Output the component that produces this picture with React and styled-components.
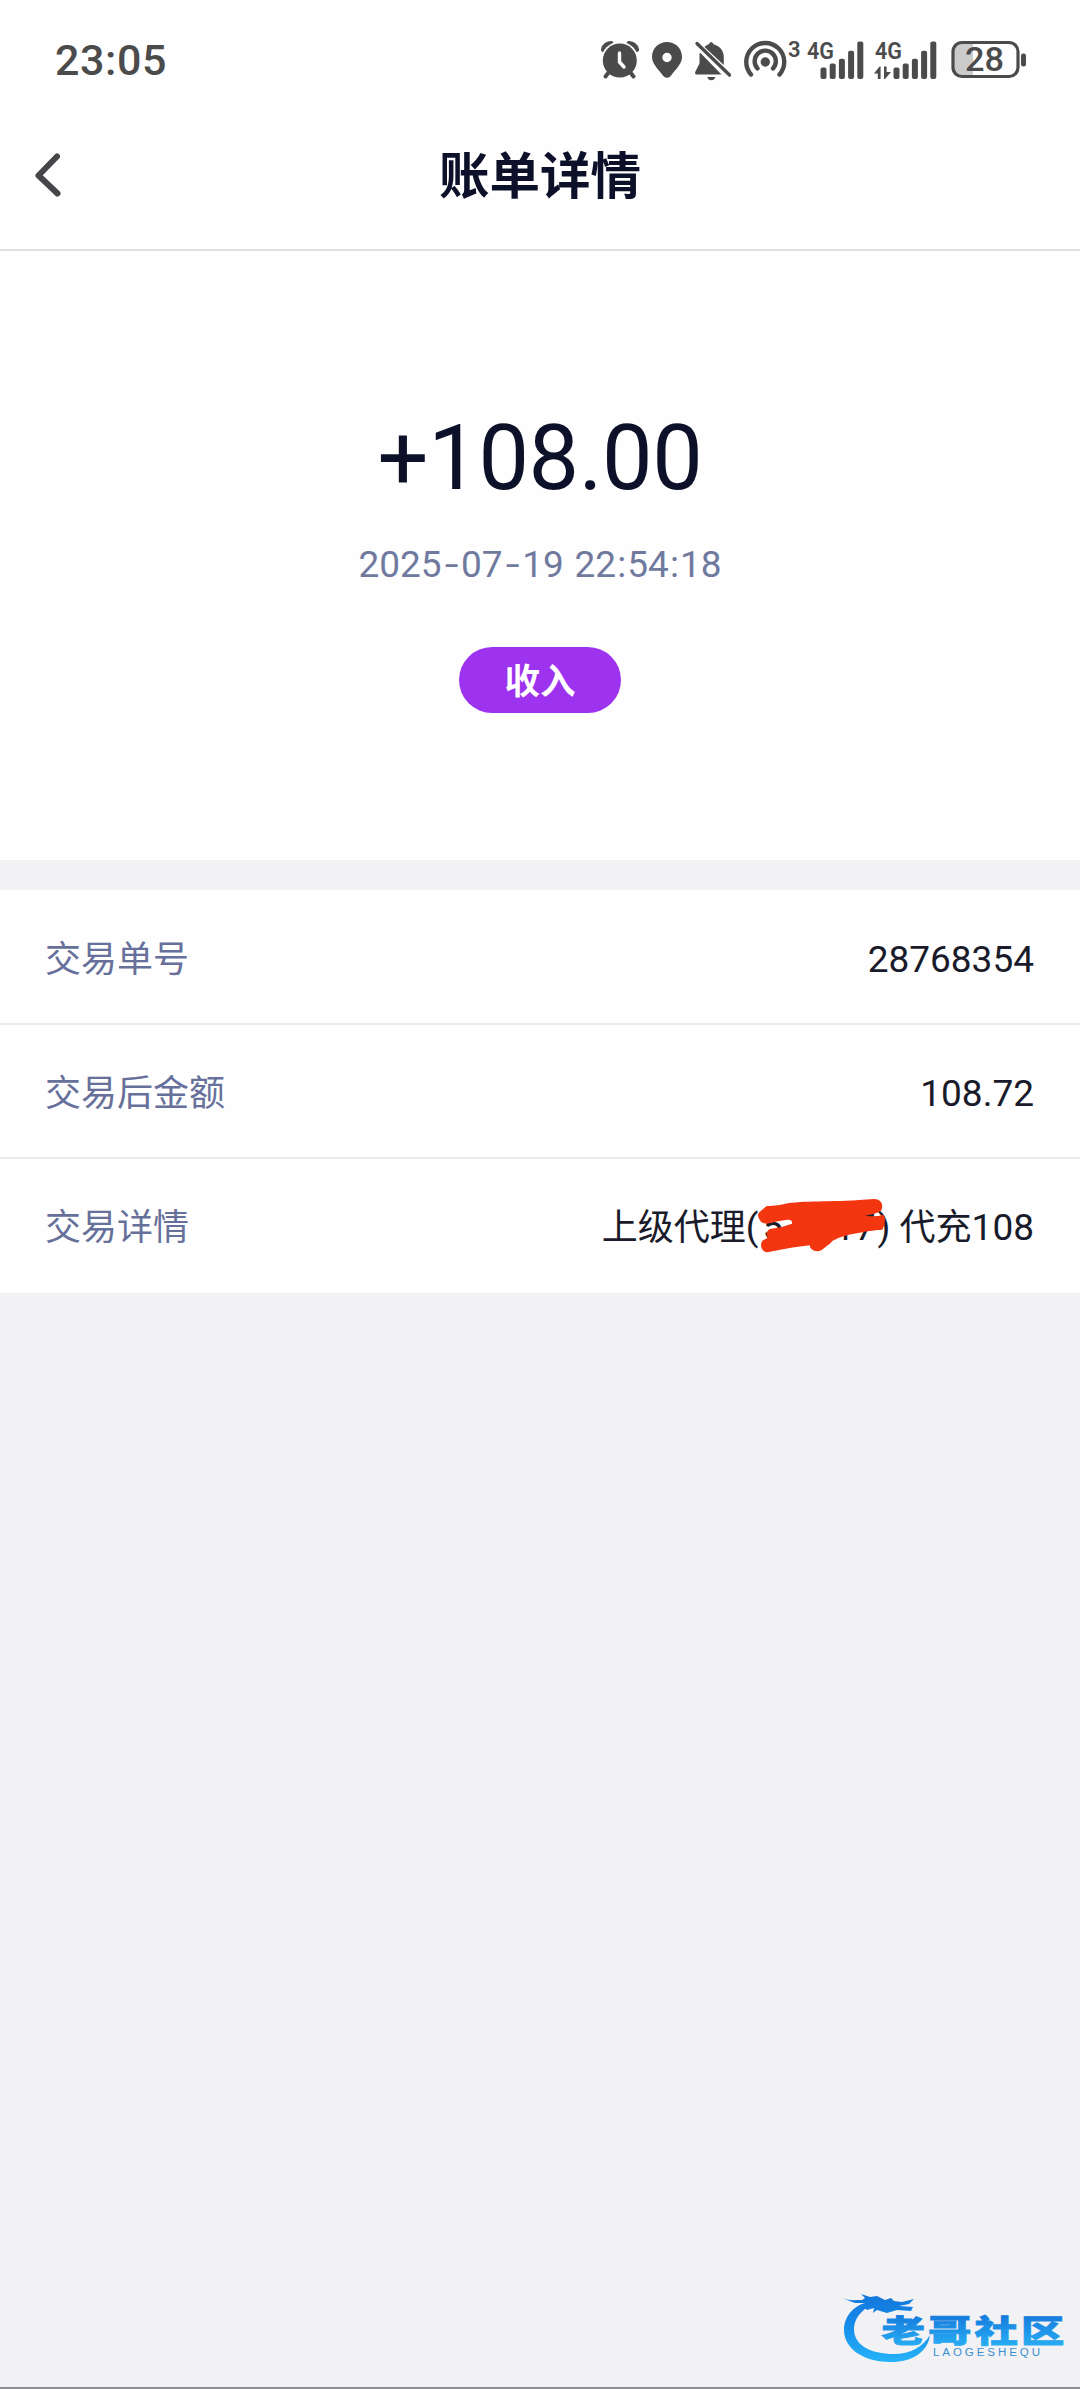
import React from 'react';
import styled, { createGlobalStyle } from 'styled-components';

const ink = '#4b4b4c';

const GlobalStyle = createGlobalStyle`
  * { box-sizing: border-box; }
  body {
    margin: 0;
    background: #f2f2f4;
    font-family: Roboto, "Noto Sans CJK SC", sans-serif;
  }
`;

const Screen = styled.div`
  width: 1080px;
  height: 2389px;
  display: flex;
  flex-direction: column;
  background: #f2f2f4;
  border-bottom: 2px solid #8f8f91;
  overflow: hidden;
`;

const StatusBar = styled.div`
  height: 120px;
  flex: none;
  display: flex;
  align-items: center;
  justify-content: space-between;
  padding: 0 52px 0 55px;
  background: #fefefe;
`;

const Clock = styled.div`
  font-size: 43px;
  font-weight: 500;
  line-height: 50px;
  letter-spacing: 0.6px;
  color: ${ink};
`;

const StatusIcons = styled.div`
  display: flex;
  align-items: center;
`;

const StatusSvg = styled.svg`
  display: block;
  height: 44px;
  width: ${(p) => p.$w}px;
  margin-left: ${(p) => p.$gap || 0}px;
  fill: ${ink};
  font-family: Roboto, sans-serif;
  overflow: visible;
`;

const Header = styled.header`
  height: 131px;
  flex: none;
  display: grid;
  grid-template-columns: 100px 1fr 100px;
  align-items: center;
  background: #fefefe;
  border-bottom: 2px solid #dfdfe0;
  padding-bottom: 20px;
`;

const BackButton = styled.button`
  border: 0;
  background: none;
  padding: 0 0 0 34px;
  display: flex;
`;

const Title = styled.h1`
  margin: 0;
  padding-top: 4px;
  text-align: center;
  font-size: 50.5px;
  font-weight: 700;
  line-height: 60px;
  color: #0c1029;
`;

const Hero = styled.section`
  height: 609px;
  flex: none;
  display: flex;
  flex-direction: column;
  align-items: center;
  padding-top: 155px;
  background: #fefefe;
`;

const Amount = styled.div`
  font-size: 90px;
  line-height: 106px;
  letter-spacing: -0.4px;
  color: #0c1029;
`;

const Timestamp = styled.div`
  margin-top: 31px;
  font-size: 37px;
  line-height: 44px;
  color: #707a9f;
  white-space: pre;
  word-spacing: 1.5px;
`;

const Dash = styled.span`
  display: inline-block;
  width: 19.5px;
  text-align: center;
  transform: scaleX(1.35);
`;

const Colon = styled.span`
  display: inline-block;
  width: 11.2px;
  text-align: center;
`;

const Tag = styled.div`
  margin-top: 60px;
  width: 162px;
  height: 66px;
  border-radius: 33px;
  display: flex;
  align-items: center;
  justify-content: center;
  padding-bottom: 3px;
  background: #9d33ee;
  color: #fff;
  font-size: 35.5px;
  font-weight: 700;
`;

const Details = styled.section`
  flex: none;
  margin-top: 30px;
  background: #fefefe;
`;

const Row = styled.div`
  height: 134px;
  display: flex;
  align-items: center;
  justify-content: space-between;
  padding: 6px 46px 0 45px;
  border-bottom: 2px solid #ebebed;
  &:first-child { height: 135px; }
  &:last-child { border-bottom-color: transparent; }
`;

const Label = styled.span`
  font-size: 36px;
  line-height: 52px;
  color: #66709a;
`;

const Value = styled.span`
  font-size: 37px;
  line-height: 52px;
  color: #191b2a;
  white-space: pre;
`;

const Han = styled.span`
  font-size: 36px;
`;

const Redacted = styled.span`
  position: relative;
  display: inline-flex;
  justify-content: space-between;
  width: 119px;
  padding: 0 2px 0 4px;
`;

const Scribble = styled.svg`
  position: absolute;
  left: -3px;
  top: -4.5px;
  width: 130px;
  height: 55px;
`;

const Watermark = styled.svg`
  align-self: flex-end;
  margin-top: auto;
  flex: none;
  width: 250px;
  height: 108px;
`;

function Signal({ x }) {
  const bars = [[0, 26], [9.2, 22], [18.4, 17.3], [27.6, 9.3], [36.8, 0]];
  return bars.map(([dx, y]) => (
    <rect key={dx} x={x + dx} y={y + 3.5} width="6" height={37.5 - y} rx="2" />
  ));
}

function StatusGlyphs() {
  return (
    <StatusIcons>
      <StatusSvg $w={44} viewBox="0 0 44 44">
        <g stroke={ink} strokeLinecap="round" fill="none">
          <path d="M5.5 11.5Q7 6 13 5.6M38.5 11.5Q37 6 31 5.6" strokeWidth="5" />
        </g>
        <circle cx="21.8" cy="22.5" r="18.8" fill="#fefefe" />
        <path d="M11 34 7.5 38.500M32 34l3.500 4.500" stroke={ink} strokeWidth="4" strokeLinecap="round" />
        <circle cx="21.8" cy="22.5" r="17" />
        <path d="M21.5 15v9l4.5 5" fill="none" stroke="#fefefe" strokeWidth="3.4" strokeLinecap="round" />
      </StatusSvg>
      <StatusSvg $w={34} $gap={8} viewBox="0 0 34 44">
        <path fillRule="evenodd" d="M17 4C8.500 4 2 10.500 2 19c0 6 4.500 10.500 11.500 19.200q3.500 3.300 7 0C27.500 29.500 32 25 32 19 32 10.500 25.500 4 17 4Zm0 10.800a4.700 4.700 0 1 1 0 9.400 4.700 4.700 0 0 1 0-9.400Z" />
      </StatusSvg>
      <StatusSvg $w={38} $gap={10} viewBox="0 0 38 44">
        <path d="M10.500 9C12 7.500 13.200 6.900 14.500 6.500q2.700-5 5.400 0C26 8 29.800 13 29.800 19v8Z" />
        <path d="M5.500 16v9.500L1.200 34q-.7 2.600 2 2.600H27.500L6 14.500Z" />
        <path d="M13.300 39h8q-1 3.300-4 3.300t-4-3.300Z" />
        <path d="m3 5.500 32.500 31.500" fill="none" stroke={ink} strokeWidth="3.300" strokeLinecap="round" />
      </StatusSvg>
      <StatusSvg $w={60} $gap={10} viewBox="0 0 60 44">
        <g fill="none" stroke={ink} strokeWidth="4.400" strokeLinecap="round">
          <path d="M9 36.500A19 19 0 1 1 37.500 36.500" />
          <path d="M15.500 30.500A10.600 10.600 0 1 1 31 30.500" />
        </g>
        <circle cx="23.300" cy="24" r="4.700" />
        <text x="46" y="18.500" fontSize="22" fontWeight="600">3</text>
      </StatusSvg>
      <StatusSvg $w={60} $gap={4} viewBox="0 0 60 44">
        <text x="1" y="20.500" fontSize="24" fontWeight="600" textLength="27" lengthAdjust="spacingAndGlyphs">4G</text>
        <Signal x={14.5} />
      </StatusSvg>
      <StatusSvg $w={66} $gap={6} viewBox="0 0 66 44">
        <text x="3" y="20.500" fontSize="24" fontWeight="600" textLength="27" lengthAdjust="spacingAndGlyphs">4G</text>
        <path d="M8.600 28.500h-1L2 35.500h3.800v5.500h2.800ZM12 28.500h2.600v5.500h4.400L13 41h-1Z" />
        <Signal x={21.5} />
      </StatusSvg>
      <StatusSvg $w={78} $gap={12} viewBox="0 0 78 44">
        <path d="M12 5h11v33H12q-8-1-8-8V13q0-7 8-8Z" fill="#cbcbcc" />
        <rect x="3" y="4.500" width="65" height="34" rx="9" fill="none" stroke={ink} strokeWidth="3.200" />
        <rect x="71" y="15.500" width="5" height="13" rx="2.300" />
        <text x="15" y="33" fontSize="34" fontWeight="500" textLength="39" lengthAdjust="spacingAndGlyphs">28</text>
      </StatusSvg>
    </StatusIcons>
  );
}

function BrandMark() {
  return (
    <Watermark viewBox="0 0 250 108">
      <defs>
        <linearGradient id="brand" gradientUnits="userSpaceOnUse" x1="0" y1="16" x2="0" y2="82">
          <stop offset="0" stopColor="#1278da" />
          <stop offset="0.45" stopColor="#158bea" />
          <stop offset="1" stopColor="#26b2f8" />
        </linearGradient>
        <linearGradient id="name" x1="0" y1="0" x2="0" y2="1">
          <stop offset="0.2" stopColor="#1479dc" />
          <stop offset="0.95" stopColor="#29b1f5" />
        </linearGradient>
      </defs>
      <g fill="url(#brand)">
        <path d="M39 23C23 26 14 38 14 51c0 19 20 32 47 32 21 0 37-10 39-27-7 12-20 19-36 19-24 0-40-9-40-25 0-10 7-19 19-25Z" />
        <path d="M12 19C19 22 25 21 32 21L35 19 31 15 40 18 47 17 55 21 61 19 64 22 72 23 84 20 79 25 69 27 83 28 81 32 67 31 57 34 47 31 43 34 44 29 37 31 32 27 36 24 25 24Z" />
      </g>
      <g transform="translate(51.500 62.500) scale(1.400 1)">
        <text x="0 33.200 66.400 99.600" y="0" fontFamily="Noto Sans CJK SC, sans-serif" fontSize="31" fontWeight="900" fill="url(#name)" stroke="url(#name)" strokeWidth=".8">老哥社区</text>
      </g>
      <text x="103" y="76.500" fontFamily="Liberation Sans, sans-serif" fontSize="10" textLength="110" lengthAdjust="spacingAndGlyphs" letterSpacing="2.500" fill="#398fd0">LAOGESHEQU</text>
    </Watermark>
  );
}

function RedactedId() {
  return (
    <Redacted>
      <span>5</span>
      <span>17</span>
      <Scribble viewBox="530 140 390 165">
        <path
          fill="#f33610"
          d="M540 183 562 164Q590 166 625 156C690 147 760 153 884 143 907 143 914 163 905 178Q890 188 857 193 887 198 914 190 922 210 909 235 870 237 815 249 765 260 754 275L727 296C712 304 693 298 691 282Q650 286 568 302C548 306 538 280 551 267L566 259Q556 241 572 233 608 229 638 217 640 204 625 205 590 209 565 217 545 218 540 204Q532 190 540 183Z"
        />
      </Scribble>
    </Redacted>
  );
}

export default function App() {
  return (
    <>
      <GlobalStyle />
      <Screen>
        <StatusBar>
          <Clock>23:05</Clock>
          <StatusGlyphs />
        </StatusBar>
        <Header>
          <BackButton aria-label="返回">
            <svg width="30" height="46" viewBox="0 0 30 46" fill="none">
              <path d="M23 4.500 4.500 23.500 23.500 41.500" stroke="#45454a" strokeWidth="6" strokeLinecap="round" strokeLinejoin="round" />
            </svg>
          </BackButton>
          <Title>账单详情</Title>
        </Header>
        <Hero>
          <Amount>+108.00</Amount>
          <Timestamp>
            2025<Dash>-</Dash>07<Dash>-</Dash>19 22<Colon>:</Colon>54<Colon>:</Colon>18
          </Timestamp>
          <Tag>收入</Tag>
        </Hero>
        <Details>
          <Row>
            <Label>交易单号</Label>
            <Value>28768354</Value>
          </Row>
          <Row>
            <Label>交易后金额</Label>
            <Value>108.72</Value>
          </Row>
          <Row>
            <Label>交易详情</Label>
            <Value>
              <Han>上级代理</Han>(<RedactedId />) <Han>代充</Han>108
            </Value>
          </Row>
        </Details>
        <BrandMark />
      </Screen>
    </>
  );
}
